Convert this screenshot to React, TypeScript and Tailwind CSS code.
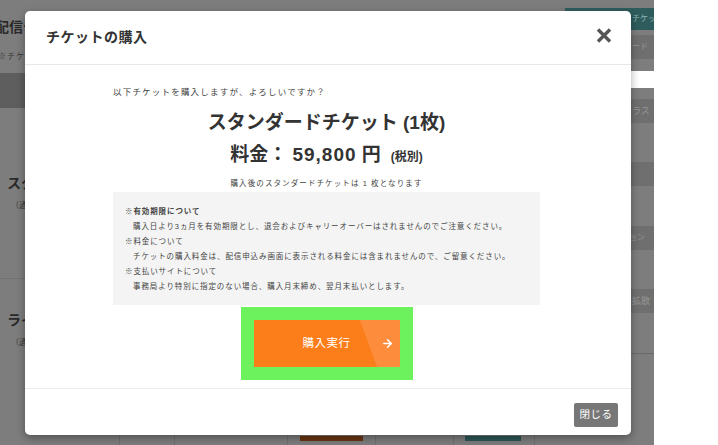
import { ArrowRight } from 'lucide-react';

const noteLines = [
  { text: '※有効期限について', head: true },
  { text: '購入日より3ヵ月を有効期限とし、退会およびキャリーオーバーはされませんのでご注意ください。', head: false },
  { text: '※料金について', head: false },
  { text: 'チケットの購入料金は、配信申込み画面に表示される料金には含まれませんので、ご留意ください。', head: false },
  { text: '※支払いサイトについて', head: false },
  { text: '事務局より特別に指定のない場合、購入月末締め、翌月末払いとします。', head: false },
];

function Backdrop() {
  return (
    <div className="flex h-full w-[654px] bg-[#7d7d7d]">
      {/* main column (dimmed) */}
      <div className="flex w-[565px] flex-col overflow-hidden">
        <div className="w-[25px] overflow-hidden">
          <div className="ml-[-5px] mt-[19px] whitespace-nowrap text-[14px] font-bold leading-[16px] text-[#2a2a2a]">
            配信チケット
          </div>
          <div className="ml-[-2px] mt-[16px] whitespace-nowrap text-[8px] leading-[12px] tracking-[1px] text-[#3a3a3a]">
            ※チケット
          </div>
        </div>
        <div className="mt-[10px] h-[35px] bg-[#5e5e5e]" />
        <div className="w-[25px] overflow-hidden">
          <div className="ml-[7px] mt-[67px] whitespace-nowrap text-[14px] font-bold leading-[16px] text-[#2a2a2a]">
            スタンダード
          </div>
          <div className="ml-[11px] mt-[9px] whitespace-nowrap text-[8px] leading-[12px] text-[#3a3a3a]">
            （通常）
          </div>
        </div>
        <div className="mt-[66px] h-px bg-[#717171]" />
        <div className="w-[25px] overflow-hidden">
          <div className="ml-[7px] mt-[33px] whitespace-nowrap text-[14px] font-bold leading-[16px] text-[#2a2a2a]">
            ライト
          </div>
          <div className="ml-[11px] mt-[9px] whitespace-nowrap text-[8px] leading-[12px] text-[#3a3a3a]">
            （通常）
          </div>
        </div>
        <div className="mt-auto flex h-[15px]">
          <div className="w-[120px] border-r border-[#6e6e6e]" />
          <div className="w-[55px] border-r border-[#6e6e6e]" />
          <div className="w-[113px] border-r border-[#6e6e6e]" />
          <div className="flex w-[88px] justify-center border-r border-[#6e6e6e]">
            <div className="mt-[6px] h-[5px] w-[63px] bg-[#6a3510]" />
          </div>
          <div className="w-[78px] border-r border-[#6e6e6e]" />
          <div className="flex w-[81px] border-r border-[#6e6e6e] pl-[11px]">
            <div className="mt-[6px] h-[5px] w-[56px] bg-[#2d5656]" />
          </div>
        </div>
      </div>
      {/* sidebar (dimmed) */}
      <div className="flex w-[89px] flex-col overflow-hidden text-[8px] leading-[12px]">
        <div className="mt-[8px] flex h-[22px] items-center overflow-hidden whitespace-nowrap bg-[#2e5c5c] pl-[67px] text-[#8fb4b4]">
          チケッ
        </div>
        <div className="mt-[5px] flex h-[24px] items-center overflow-hidden whitespace-nowrap bg-[#6f6f6f] pl-[35px] text-[#959595]">
          スタンダード
        </div>
        <div className="mt-[12px] h-[17px] bg-white" />
        <div className="mt-[11px] flex h-[24px] items-center overflow-hidden whitespace-nowrap bg-[#6f6f6f] pl-[58px] text-[9px] text-[#959595]">
          クラス
        </div>
        <div className="mt-[39px] h-[24px] bg-[#6f6f6f]" />
        <div className="mt-[40px] flex h-[24px] items-center overflow-hidden whitespace-nowrap bg-[#6f6f6f] pl-[40px] text-[#959595]">
          オプション
        </div>
        <div className="mt-[39px] flex h-[24px] items-center overflow-hidden whitespace-nowrap bg-[#6f6f6f] pl-[67px] text-[9px] text-[#959595]">
          拡散
        </div>
        <div className="mt-[40px] h-px bg-[#6a6a6a]" />
      </div>
    </div>
  );
}

function PurchaseModal() {
  return (
    <div className="absolute left-[25px] top-[11px] flex h-[424px] w-[606px] flex-col rounded-[5px] bg-white text-[#333] shadow-[0_3px_8px_rgba(0,0,0,0.35)]">
      <div className="flex h-[54px] items-center justify-between border-b border-[#e8e8e8] pl-[21px] pr-[19px]">
        <h2 className="text-[14px] font-bold tracking-[0.5px] text-[#333]">チケットの購入</h2>
        <svg width="16" height="15" viewBox="0 0 16 15" className="mt-[-5px]">
          <path d="M2 1.5 L14 13.5 M14 1.5 L2 13.5" stroke="#555" strokeWidth="3.4" strokeLinecap="butt" />
        </svg>
      </div>

      <div className="flex flex-1 flex-col items-center pr-[3px] pt-[20px]">
        <div className="w-[427px]">
          <p className="text-[8.5px] leading-[14px] tracking-[1.2px] text-[#444]">
            以下チケットを購入しますが、よろしいですか？
          </p>
          <p className="mt-[12px] text-center text-[19px] font-bold leading-[24px] text-[#333]">
            スタンダードチケット (1枚)
          </p>
          <p className="mt-[9px] text-center text-[19px] font-bold leading-[22px] text-[#333]">
            料金： <span className="tracking-[1px]">59,800</span> 円
            <span className="ml-[10px] text-[12px]">(税別)</span>
          </p>
          <p className="mt-[10px] text-center text-[7.5px] leading-[12px] tracking-[1.1px] text-[#444]">
            購入後のスタンダードチケットは 1 枚となります
          </p>
          <div className="mt-[2px] h-[113px] bg-[#f4f4f4] px-[12px] pt-[12px]">
            {noteLines.map((l) => (
              <div
                key={l.text}
                className={`whitespace-nowrap text-[7.5px] leading-[15px] tracking-[0.9px] text-[#444] ${
                  l.head ? 'font-bold' : l.text.startsWith('※') ? '' : 'pl-[8px]'
                }`}
              >
                {l.text}
              </div>
            ))}
          </div>
        </div>

        <div className="mt-[2px] bg-[#6cf25d] p-[13px]">
          <button className="relative flex h-[47px] w-[146px] items-center justify-center overflow-hidden bg-[#fb7e1a] text-white">
            <svg className="absolute right-0 top-0" width="40" height="47" viewBox="0 0 40 47">
              <polygon points="0,0 40,0 40,47 17,47" fill="#fd8c3d" />
            </svg>
            <span className="relative text-[11.5px] tracking-[0.5px]">購入実行</span>
            <ArrowRight className="absolute right-[6px]" size={13} strokeWidth={2.75} />
          </button>
        </div>
      </div>

      <div className="flex h-[47px] items-start justify-end border-t border-[#ececec] pr-[13px] pt-[14px]">
        <button className="h-[24px] w-[44px] rounded-[2px] bg-[#777] text-[10.5px] tracking-[0.5px] text-white">
          閉じる
        </button>
      </div>
    </div>
  );
}

export default function App() {
  return (
    <div
      className="relative h-[445px] w-[718px] overflow-hidden bg-white"
      style={{ fontFamily: '"Liberation Sans", "Noto Sans CJK JP", sans-serif' }}
    >
      <Backdrop />
      <PurchaseModal />
    </div>
  );
}
